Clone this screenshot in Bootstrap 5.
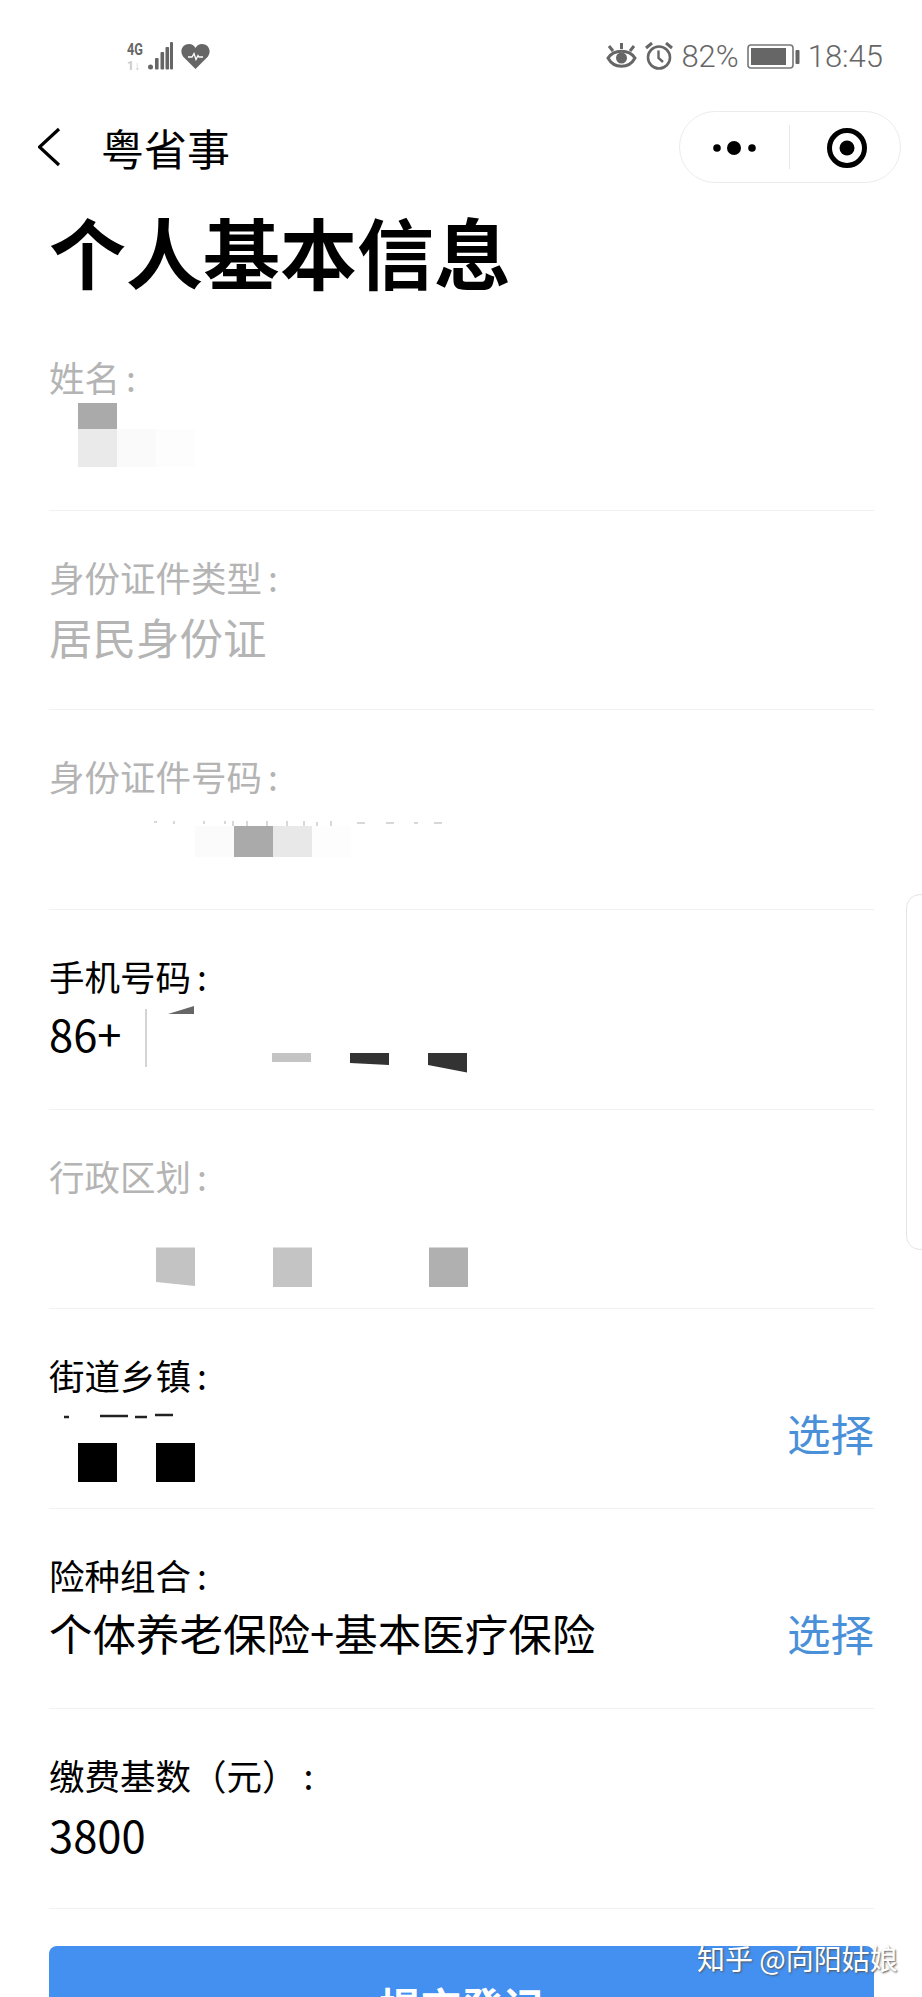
<!DOCTYPE html>
<html lang="zh-CN">

<head>
    <meta charset="UTF-8">
    <meta name="viewport" content="width=device-width, initial-scale=1.0">
    <title>个人基本信息</title>
    <link href="https://cdn.jsdelivr.net/npm/bootstrap@5.3.0/dist/css/bootstrap.min.css" rel="stylesheet">
    <style>
        html,
        body {
            height: 1997px;
            overflow: hidden;
            background: #fff;
        }

        .screen {
            position: relative;
            height: 1997px;
            overflow: hidden;
            color: #000;
            font-family: "Noto Sans CJK SC", "Liberation Sans", sans-serif;
        }

        .status-bar {
            height: 100px;
            padding: 12px 39px 0 127px;
            color: #666;
            font-family: Roboto, "Liberation Sans", sans-serif;
            font-size: 31px;
            font-weight: 300;
            line-height: 1;
        }

        .top-nav {
            height: 94px;
            padding: 11px 21px 11px 38px;
        }

        .nav-name {
            margin-left: 21px;
            font-size: 43px;
            line-height: 72px;
        }

        .capsule {
            width: 222px;
            height: 72px;
            border: 1.5px solid #ececec;
            border-radius: 36px;
        }

        .page-title {
            height: 117px;
            margin: 0 0 0 49px;
            font-size: 77px;
            font-weight: 700;
            line-height: 113px;
        }

        .form-area {
            margin: 0 48px 0 49px;
        }

        .info-row {
            height: 199.7px;
            padding-top: 42px;
            border-bottom: 1.5px solid #f1f1f1;
        }

        .info-label {
            height: 50px;
            font-size: 35.5px;
            line-height: 47px;
        }

        .colon-mark {
            margin-left: 6px;
        }

        .info-value {
            height: 76px;
            font-size: 43.5px;
            line-height: 68px;
        }

        .value-raised {
            line-height: 63px;
        }

        .muted-row {
            color: #b4b4b4;
        }

        .pick-link {
            color: #4a90d9;
            text-decoration: none;
        }

        .code-divider {
            width: 2px;
            height: 58px;
            margin: 7px 0 0 24px;
            background: #d4d4d4;
            align-self: flex-start;
        }

        .mask-art {
            display: block;
            overflow: visible;
        }

        .submit-btn {
            height: 120px;
            margin-top: 37px;
            border: 0;
            border-radius: 8px;
            background: #4390f1;
            color: #fff;
            font-size: 41px;
            font-weight: 700;
        }

        .side-handle {
            position: absolute;
            top: 894px;
            right: -12px;
            width: 28px;
            height: 356px;
            border: 1.5px solid #e4e4e4;
            border-radius: 14px;
        }

        .watermark {
            position: absolute;
            top: 1939px;
            left: 697px;
            color: #fff;
            font-size: 28px;
            line-height: 38px;
            text-shadow: 1px 1px 2px #555;
        }
    </style>
</head>

<body>

    <div class="screen">

        <!-- Barre d'etat -->
        <div class="status-bar d-flex justify-content-between align-items-center">
            <div class="d-flex align-items-center gap-2">
                <svg width="46" height="36" viewBox="0 -3 46 36">
                    <text x="0" y="14" font-family="Roboto, sans-serif" font-size="17" font-weight="700" fill="#666" textLength="16" lengthAdjust="spacingAndGlyphs">4G</text>
                    <text x="0" y="29" font-family="Roboto, sans-serif" font-size="12" font-weight="700" fill="#c8c8c8">1↓</text>
                    <circle cx="23.500" cy="26" r="2.500" fill="#666" />
                    <rect x="28" y="17" width="3.600" height="11.500" rx="1" fill="#666" />
                    <rect x="33.500" y="11" width="3.600" height="17.500" rx="1" fill="#666" />
                    <rect x="38.500" y="6" width="3.600" height="22.500" rx="1" fill="#666" />
                    <rect x="43" y="1" width="3" height="27.500" rx="1" fill="#666" />
                </svg>
                <svg width="29" height="25" viewBox="0 0 29 25">
                    <path d="M14.500 25 L2 12.500 C-2 6 2 0 8 0 C11 0 13 1.500 14.500 4 C16 1.500 18 0 21 0 C27 0 31 6 27 12.500 Z" fill="#666" />
                    <polyline points="7,13 11,13 13,9.500 15,15.500 17,11.500 18,13 22,13" fill="none" stroke="#fff" stroke-width="1.300" />
                </svg>
            </div>
            <div class="d-flex align-items-center">
                <svg width="31" height="27" viewBox="0 0 31 27">
                    <path d="M2 15 C8 6 23 6 29 15 C23 26 8 26 2 15 Z" fill="none" stroke="#666" stroke-width="3" />
                    <circle cx="15.500" cy="15" r="5.500" fill="#666" />
                    <path d="M3 3 L7 8 M15.500 0 V6 M28 3 L24 8" stroke="#666" stroke-width="3" />
                </svg>
                <svg class="ms-2" width="28" height="28" viewBox="0 0 28 28">
                    <circle cx="14" cy="15.500" r="11" fill="none" stroke="#666" stroke-width="2.600" />
                    <path d="M13.500 8.500 V16 L18 20" fill="none" stroke="#666" stroke-width="2.400" />
                    <path d="M1 6 L7 1 M27 6 L21 1" stroke="#666" stroke-width="3" />
                </svg>
                <span class="ms-2">82%</span>
                <svg class="ms-2" width="53" height="25" viewBox="0 0 53 25">
                    <rect x="1" y="1" width="45" height="23" rx="3" fill="none" stroke="#777" stroke-width="1.600" />
                    <rect x="4" y="4" width="35" height="17" fill="#666" />
                    <rect x="48.500" y="6" width="4" height="14" rx="1" fill="#666" />
                </svg>
                <span class="status-time ms-2">18:45</span>
            </div>
        </div>

        <!-- Navigation du mini programme -->
        <div class="top-nav d-flex justify-content-between align-items-center">
            <div class="d-flex align-items-center">
                <svg width="42" height="40" viewBox="0 0 42 40">
                    <polyline points="21,2 1.500,20 21,38" fill="none" stroke="#000" stroke-width="3.200" />
                </svg>
                <span class="nav-name">粤省事</span>
            </div>
            <div class="capsule d-flex align-items-center">
                <svg width="110" height="70" viewBox="0 0 110 70">
                    <circle cx="37" cy="36" r="3.800" fill="#000" />
                    <circle cx="54" cy="36" r="7" fill="#000" />
                    <circle cx="72" cy="36" r="3.800" fill="#000" />
                    <rect x="109" y="13" width="1" height="44" fill="#e8e8e8" />
                </svg>
                <svg width="110" height="70" viewBox="0 0 110 70">
                    <circle cx="57" cy="36" r="17.500" fill="none" stroke="#000" stroke-width="5" />
                    <circle cx="57" cy="36" r="7.500" fill="#000" />
                </svg>
            </div>
        </div>

        <h1 class="page-title">个人基本信息</h1>

        <div class="form-area">
            <div class="info-row muted-row">
                <div class="info-label">姓名<span class="colon-mark">:</span></div>
                <div class="info-value">
                    <svg class="mask-art" width="300" height="76" viewBox="0 0 300 76">
                        <rect x="29" y="0" width="39" height="26" fill="#aaa" />
                        <rect x="29" y="26" width="39" height="38" fill="#eaeaea" />
                        <rect x="68" y="26" width="39" height="38" fill="#fafafa" />
                        <rect x="107" y="26" width="39" height="38" fill="#fdfdfd" />
                    </svg>
                </div>
            </div>

            <div class="info-row muted-row">
                <div class="info-label">身份证件类型<span class="colon-mark">:</span></div>
                <div class="info-value">居民身份证</div>
            </div>

            <div class="info-row muted-row">
                <div class="info-label">身份证件号码<span class="colon-mark">:</span></div>
                <div class="info-value">
                    <svg class="mask-art" width="500" height="76" viewBox="0 0 500 76">
                        <path d="M105 20 h3 M125 19 v3 M155 19 v3 M176 19 v3 M184 19 v5 M198 19 v5 M218 19 v5 M238 19 v5 M255 19 v5 M268 20 v4 M282 19 v5 M308 21 h8 M337 21 h8 M365 21 h4 M385 21 h8" stroke="#ccc" stroke-width="1.500" />
                        <rect x="146" y="24" width="39" height="31" fill="#fbfbfb" />
                        <rect x="185" y="24" width="39" height="31" fill="#aaa" />
                        <rect x="224" y="24" width="39" height="31" fill="#e8e8e8" />
                        <rect x="263" y="24" width="39" height="31" fill="#fdfdfd" />
                    </svg>
                </div>
            </div>

            <div class="info-row">
                <div class="info-label">手机号码<span class="colon-mark">:</span></div>
                <div class="info-value value-raised d-flex">
                    <span>86+</span>
                    <span class="code-divider"></span>
                    <svg class="mask-art" width="400" height="76" viewBox="0 0 400 76">
                        <polygon points="21,12 47,4 47,12" fill="#666" />
                        <rect x="125" y="51" width="39" height="9" fill="#c4c4c4" />
                        <polygon points="203,51 242,51 242,63 203,61" fill="#333" />
                        <polygon points="281,51 320,51 320,70.500 281,63" fill="#333" />
                    </svg>
                </div>
            </div>

            <div class="info-row muted-row">
                <div class="info-label">行政区划<span class="colon-mark">:</span></div>
                <div class="info-value">
                    <svg class="mask-art" width="500" height="76" viewBox="0 0 500 76">
                        <polygon points="107,45.500 146,45.500 146,84 107,80" fill="#c3c3c3" />
                        <rect x="224" y="45.500" width="39" height="39.500" fill="#c4c4c4" />
                        <rect x="380" y="45.500" width="39" height="39.500" fill="#b0b0b0" />
                    </svg>
                </div>
            </div>

            <div class="info-row">
                <div class="info-label">街道乡镇<span class="colon-mark">:</span></div>
                <div class="info-value value-raised d-flex justify-content-between">
                    <svg class="mask-art" width="300" height="76" viewBox="0 0 300 76">
                        <path d="M15 16 h5 M51 15 h28 M86 16 h12 M106 14 h18" stroke="#222" stroke-width="2.500" />
                        <rect x="29" y="42" width="39" height="39" fill="#000" />
                        <rect x="107" y="42" width="39" height="39" fill="#000" />
                    </svg>
                    <a class="pick-link" href="#">选择</a>
                </div>
            </div>

            <div class="info-row">
                <div class="info-label">险种组合<span class="colon-mark">:</span></div>
                <div class="info-value value-raised d-flex justify-content-between">
                    <span>个体养老保险+基本医疗保险</span>
                    <a class="pick-link" href="#">选择</a>
                </div>
            </div>

            <div class="info-row">
                <div class="info-label">缴费基数（元）<span class="colon-mark">:</span></div>
                <div class="info-value">3800</div>
            </div>

            <button class="btn submit-btn w-100" type="button">提交登记</button>
        </div>

        <div class="side-handle"></div>
        <div class="watermark">知乎 @向阳姑娘</div>

    </div>

    <script src="https://cdn.jsdelivr.net/npm/bootstrap@5.3.0/dist/js/bootstrap.bundle.min.js"></script>
</body>

</html>
